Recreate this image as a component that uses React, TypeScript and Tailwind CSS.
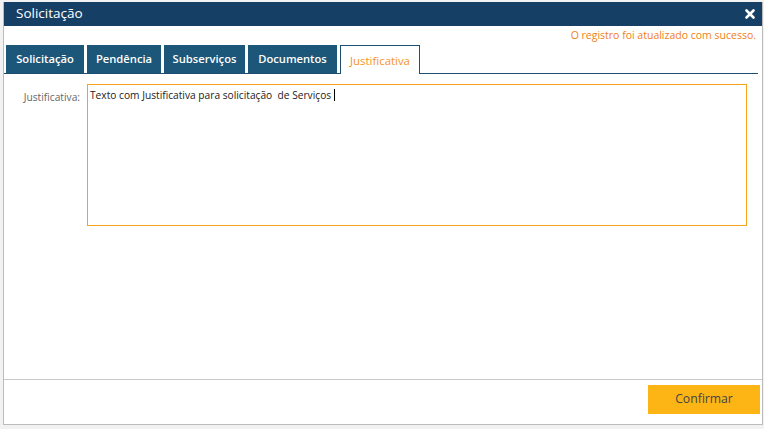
import { X } from 'lucide-react';

const tabs = [
  { label: 'Solicitação', width: 'w-[78px]' },
  { label: 'Pendência', width: 'w-[74px]' },
  { label: 'Subserviços', width: 'w-[81px]' },
  { label: 'Documentos', width: 'w-[89px]' },
];

export default function App() {
  return (
    <div
      className="h-[429px] w-[764px] bg-[#f2f2f2] pt-[2px] pl-[3px]"
      style={{ fontFamily: '"Open Sans", "Noto Sans", sans-serif' }}
    >
      <div className="flex h-[423px] w-[760px] flex-col border-x border-b border-[#bcbcbc] bg-white">
        {/* header */}
        <div className="flex h-[24px] shrink-0 items-center justify-between bg-[#163f66] pl-[12px] pr-[5px]">
          <span className="text-[13.5px] leading-none text-white">Solicitação</span>
          <X className="h-[14px] w-[14px] text-white" strokeWidth={4.5} />
        </div>

        {/* message */}
        <div className="flex h-[19px] shrink-0 items-center justify-end pr-[6px]">
          <span className="text-[10.5px] leading-none text-[#f07f14]">
            O registro foi atualizado com sucesso.
          </span>
        </div>

        {/* tabs */}
        <div className="mr-[4px] flex h-[29px] shrink-0 items-end gap-[3px] border-b border-[#1d4f73] pl-[2px]">
          {tabs.map((t) => (
            <div
              key={t.label}
              className={`${t.width} flex h-[28px] items-center justify-center bg-[#1c5678] pt-px text-[11.2px] font-semibold text-white`}
            >
              {t.label}
            </div>
          ))}
          <div className="-mb-px flex h-[29px] w-[80px] items-center justify-center border-x border-t border-[#1d4f73] bg-white pt-px text-[11.4px] text-[#f7931e]">
            Justificativa
          </div>
        </div>

        {/* body */}
        <div className="flex flex-1 items-start pt-[10px]">
          <div className="w-[83px] pt-[8px] pr-[7px] text-right text-[10.2px] leading-none text-[#666]">
            Justificativa:
          </div>
          <div className="h-[142px] w-[660px] border border-[#f5a31a] px-[2px] pt-[2px] text-[10.2px] leading-[14px] text-[#222]">
            Texto com Justificativa para solicitação&nbsp; de Serviços
            <span className="ml-[3px] inline-block h-[12px] w-px translate-y-[2px] bg-black" />
          </div>
        </div>

        {/* footer */}
        <div className="flex h-[45px] shrink-0 items-start justify-end border-t border-[#c8c8c8] pt-[5px] pr-[2px]">
          <button className="h-[29px] w-[112px] bg-[#fdb515] text-[12.2px] text-[#444]">Confirmar</button>
        </div>
      </div>
    </div>
  );
}
